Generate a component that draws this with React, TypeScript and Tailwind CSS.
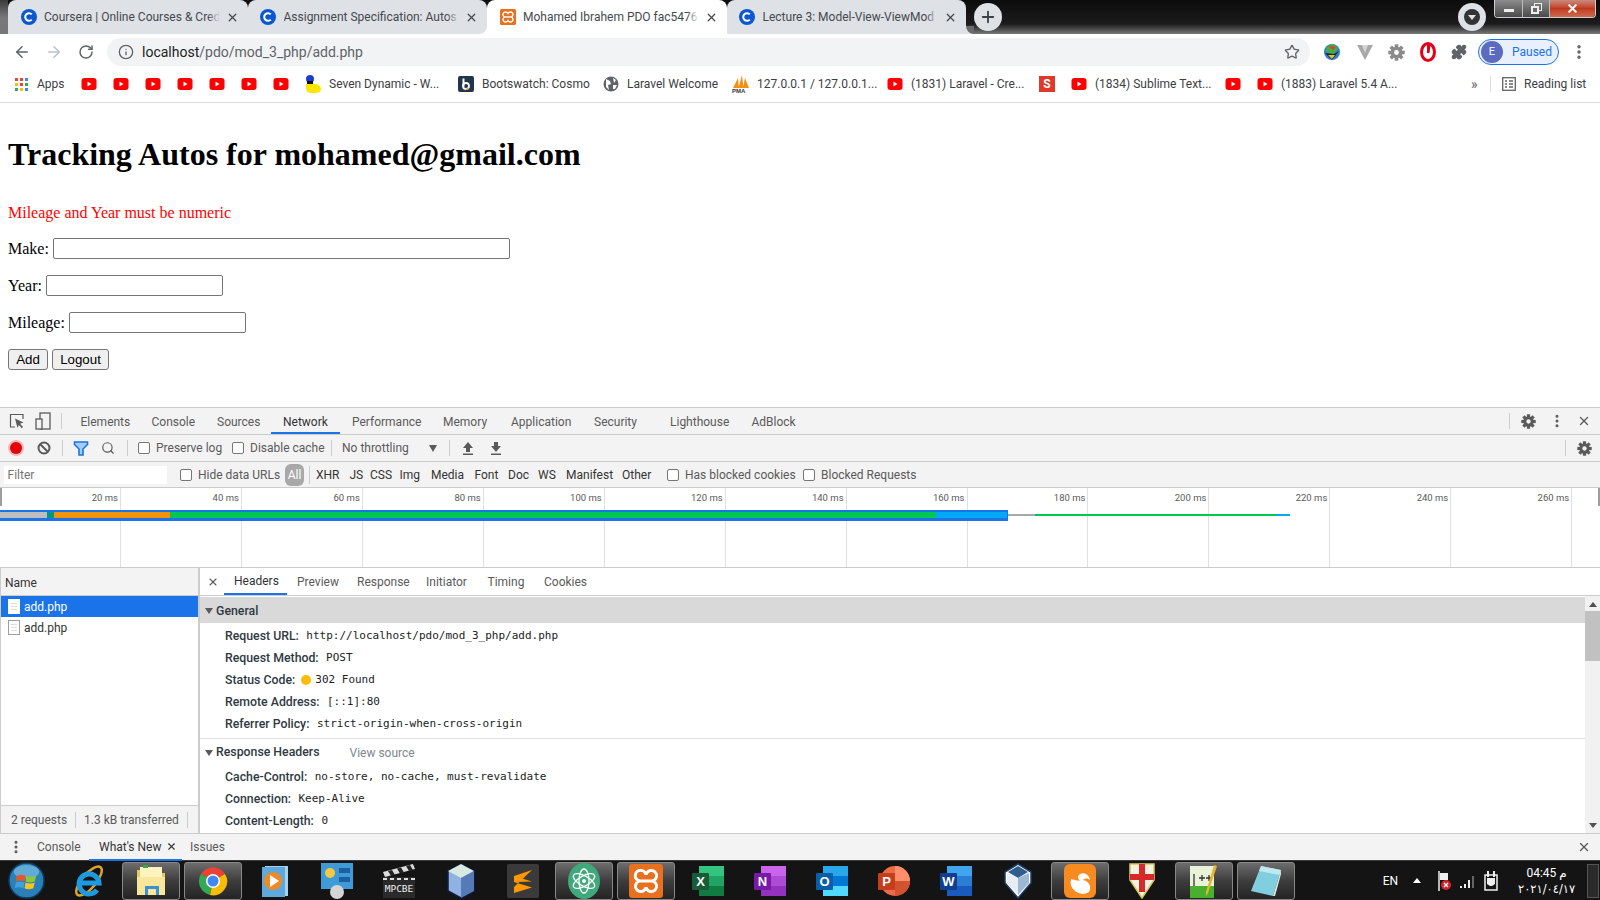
import { ArrowLeft, ArrowRight, RotateCw, Star, Info, Puzzle, EllipsisVertical, X, Plus, Search } from "lucide-react";

const uiFont = "font-['Roboto','Liberation_Sans',sans-serif]";
const monoFont = "font-['DejaVu_Sans_Mono',monospace]";

function CourseraIcon() {
  return (
    <svg width="16" height="16" viewBox="0 0 16 16" className="shrink-0">
      <circle cx="8" cy="8" r="8" fill="#0b57d0" />
      <path d="M10.8 5.4a3.8 3.8 0 1 0 0 5.2" fill="none" stroke="#fff" strokeWidth="2" />
    </svg>
  );
}

function XamppIcon({ size = 16 }: { size?: number }) {
  return (
    <svg width={size} height={size} viewBox="0 0 16 16" className="shrink-0">
      <rect width="16" height="16" rx="1.500" fill="#e8701f" />
      <path
        d="M5.500 3a2.500 2.500 0 0 0-1 4.800v.4a2.500 2.500 0 1 0 3.300 3.300h.4a2.500 2.500 0 1 0 3.300-3.300v-.4a2.500 2.500 0 1 0-3.300-3.300h-.4A2.500 2.500 0 0 0 5.500 3z"
        fill="none"
        stroke="#fff"
        strokeWidth="1.400"
      />
      <path d="M5 8h6" stroke="#fff" strokeWidth="1.400" />
    </svg>
  );
}

function YouTube() {
  return (
    <svg width="16" height="16" viewBox="0 0 16 16" className="shrink-0">
      <rect x="0.500" y="2" width="15" height="12" rx="3" fill="#f00" />
      <path d="M6.500 5.500v5l4-2.500z" fill="#fff" />
    </svg>
  );
}

function AppsGrid() {
  const colors = ["#ea4335", "#ea4335", "#4285f4", "#fbbc05", "#ea4335", "#34a853", "#34a853", "#fbbc05", "#4285f4"];
  return (
    <div className="grid grid-cols-3 gap-[2px] w-[13px] h-[13px] mx-[1px] shrink-0">
      {colors.map((c, i) => (
        <div key={i} className="w-[3px] h-[3px]" style={{ backgroundColor: c }} />
      ))}
    </div>
  );
}

function SevenIcon() {
  return (
    <svg width="16" height="18" viewBox="0 0 16 18" className="shrink-0">
      <circle cx="5" cy="4" r="4" fill="#1a3fd0" />
      <rect x="2" y="6" width="6" height="3" fill="#111" />
      <path d="M1 9h9a6 5 0 0 1 6 5c0 2-2 4-5 4H6a5 5 0 0 1-5-4z" fill="#ffe600" />
    </svg>
  );
}

function BootswatchIcon() {
  return (
    <svg width="16" height="16" viewBox="0 0 16 16" className="shrink-0">
      <rect width="16" height="16" rx="2" fill="#233548" />
      <path d="M5.500 2.500v8" stroke="#fff" strokeWidth="2" />
      <circle cx="8" cy="10" r="3" fill="none" stroke="#fff" strokeWidth="1.800" />
      <path d="M10.500 12a3.500 3.500 0 0 1-3 1.500" stroke="#f0a030" strokeWidth="1.500" fill="none" />
    </svg>
  );
}

function GlobeIcon() {
  return (
    <svg width="16" height="16" viewBox="0 0 16 16" className="shrink-0">
      <circle cx="8" cy="8" r="7.500" fill="#5f6368" />
      <path d="M3 3l4 2 1 3-3 1 1 5-3-3zM10 2l3 2-2 3zM10 9l4 0-2 4-2 0z" fill="#fff" />
    </svg>
  );
}

function PmaIcon() {
  return (
    <svg width="18" height="18" viewBox="0 0 18 18" className="shrink-0">
      <path d="M1 13L6 3l1 10zM6.500 13L10 0l1.500 13zM11 13l2-10 4 10z" fill="#f29111" />
      <text x="0" y="18" fontSize="6" fontWeight="700" fill="#333" fontFamily="Liberation Sans, sans-serif">PMA</text>
    </svg>
  );
}

function SublimeS() {
  return <div className="w-4 h-4 shrink-0 bg-[#e0392b] text-white text-[12px] font-bold flex items-center justify-center">S</div>;
}

const bookmarks: { w: number; icon: React.ReactNode; label?: string }[] = [
  { w: 68, icon: <AppsGrid />, label: "Apps" },
  { w: 32, icon: <YouTube /> },
  { w: 32, icon: <YouTube /> },
  { w: 32, icon: <YouTube /> },
  { w: 32, icon: <YouTube /> },
  { w: 32, icon: <YouTube /> },
  { w: 32, icon: <YouTube /> },
  { w: 32, icon: <YouTube /> },
  { w: 153, icon: <SevenIcon />, label: "Seven Dynamic - W..." },
  { w: 145, icon: <BootswatchIcon />, label: "Bootswatch: Cosmo" },
  { w: 130, icon: <GlobeIcon />, label: "Laravel Welcome" },
  { w: 154, icon: <PmaIcon />, label: "127.0.0.1 / 127.0.0.1..." },
  { w: 152, icon: <YouTube />, label: "(1831) Laravel - Cre..." },
  { w: 32, icon: <SublimeS /> },
  { w: 154, icon: <YouTube />, label: "(1834) Sublime Text..." },
  { w: 32, icon: <YouTube /> },
  { w: 212, icon: <YouTube />, label: "(1883) Laravel 5.4 A..." },
];

function ChromeTab({ icon, title, active, fade, flare }: { icon: React.ReactNode; title: string; active?: boolean; fade: string; flare?: React.ReactNode }) {
  return (
    <div className={`relative w-[239.500px] h-[34px] rounded-t-[8px] flex items-center pl-[12.500px] pr-[9px] shrink-0 ${active ? "bg-white" : "bg-[#dee1e6]"}`}>
      {icon}
      <div className="relative flex-1 ml-[7.500px] overflow-hidden whitespace-nowrap text-[12px] leading-[34px] text-[#45494d]">
        {title}
        <div className={`absolute right-0 top-0 bottom-0 w-3 ${fade}`} />
      </div>
      <X size={13} strokeWidth={2.400} className="ml-[6px] shrink-0 text-[#45494d]" />
      {flare}
    </div>
  );
}

function TabStrip() {
  return (
    <div className="relative h-[34px] flex pl-[8px] bg-linear-to-b from-[#0c0c0c] via-[#1b1b1b] via-70% to-[#7a7a7a]">
      <div className="absolute left-0 top-0 w-[8px] h-full bg-linear-to-b from-[#3a3a3a] via-[#777] to-[#777]" />
      <ChromeTab icon={<CourseraIcon />} title="Coursera | Online Courses & Cred" fade="bg-linear-to-r from-transparent to-[#dee1e6]" />
      <div className="w-0 relative">
        <div className="absolute left-0 top-[7px] h-[20px] w-px bg-[#80868b]" />
      </div>
      <ChromeTab icon={<CourseraIcon />} title="Assignment Specification: Autos" fade="bg-linear-to-r from-transparent to-[#dee1e6]" />
      <ChromeTab
        active
        icon={<XamppIcon />}
        title="Mohamed Ibrahem PDO fac5476"
        fade="bg-linear-to-r from-transparent to-white"
        flare={
          <>
            <div className="absolute -left-[8px] bottom-0 w-[8px] h-[8px] bg-white">
              <div className="w-full h-full bg-[#dee1e6] rounded-br-[8px]" />
            </div>
            <div className="absolute -right-[8px] bottom-0 w-[8px] h-[8px] bg-white">
              <div className="w-full h-full bg-[#dee1e6] rounded-bl-[8px]" />
            </div>
          </>
        }
      />
      <ChromeTab
        icon={<CourseraIcon />}
        title="Lecture 3: Model-View-ViewMod"
        fade="bg-linear-to-r from-transparent to-[#dee1e6]"
        flare={
          <div className="absolute -right-[8px] bottom-0 w-[8px] h-[8px] bg-[#dee1e6]">
            <div className="w-full h-full bg-[#6a6a6a] rounded-bl-[8px]" />
          </div>
        }
      />
      <div className="ml-[8px] mt-[2.500px] w-7 h-7 rounded-full bg-[#dee1e6] flex items-center justify-center text-[#3c4043] shrink-0">
        <Plus size={18} strokeWidth={2.400} />
      </div>
      <div className="ml-[456px] mt-[3px] w-7 h-7 rounded-full bg-[#dee1e6] flex items-center justify-center shrink-0">
        <div className="w-[16px] h-[16px] rounded-full bg-[#333] flex items-center justify-center">
          <div className="w-0 h-0 border-l-[4px] border-r-[4px] border-t-[5px] border-l-transparent border-r-transparent border-t-[#dee1e6]" />
        </div>
      </div>
      {/* window controls */}
      <div className="absolute right-[4px] top-0 h-[18px] w-[102px] flex rounded-b-[4px] border border-t-0 border-[#c9ccd1] overflow-hidden">
        <div className="w-[28px] bg-linear-to-b from-[#8d8d8d] to-[#4a4a4a] flex items-center justify-center border-r border-[#bbb]">
          <div className="w-[10px] h-[3px] bg-[#eee] mt-[4px]" />
        </div>
        <div className="relative w-[27px] bg-linear-to-b from-[#8d8d8d] to-[#4a4a4a] flex items-center justify-center border-r border-[#bbb]">
          <div className="relative w-[11px] h-[11px]">
            <div className="absolute right-0 top-0 w-[8px] h-[8px] border border-[#eee]" />
            <div className="absolute left-0 bottom-0 w-[8px] h-[8px] border-2 border-[#eee] bg-[#6a6a6a]" />
          </div>
        </div>
        <div className="flex-1 bg-linear-to-b from-[#c98a7c] via-[#c0391d] to-[#cf6a50] flex items-center justify-center text-[#f5f0ee]">
          <X size={13} strokeWidth={4} />
        </div>
      </div>
    </div>
  );
}

function Gear({ size = 16, color = "#5a5a5a", hole = "#f3f3f3" }: { size?: number; color?: string; hole?: string }) {
  return (
    <svg width={size} height={size} viewBox="0 0 16 16" className="shrink-0">
      {[0, 45, 90, 135].map((a) => (
        <rect key={a} x="6.300" y="0.300" width="3.400" height="15.400" fill={color} transform={`rotate(${a} 8 8)`} />
      ))}
      <circle cx="8" cy="8" r="5.500" fill={color} />
      <circle cx="8" cy="8" r="2.300" fill={hole} />
    </svg>
  );
}

function NavBar() {
  return (
    <div className="h-[34px] bg-white flex items-center pl-[13px] pt-[2px]">
      <ArrowLeft size={18} strokeWidth={2} className="text-[#5f6368]" />
      <ArrowRight size={18} strokeWidth={2} className="ml-[14px] text-[#bdc1c6]" />
      <RotateCw size={16} strokeWidth={2.200} className="ml-[15px] text-[#5f6368]" />
      <div className="ml-[13px] w-[1203px] h-[28px] rounded-full bg-[#f1f3f4] flex items-center pl-[11px] pr-[10px]">
        <Info size={16} strokeWidth={2} className="text-[#5f6368]" />
        <span className="ml-[8px] text-[14px] text-[#5f6368]">
          <span className="text-[#202124]">localhost</span>/pdo/mod_3_php/add.php
        </span>
        <Star size={16} strokeWidth={2} className="ml-auto text-[#5f6368]" />
      </div>
      <div className="ml-[13px] flex items-center">
        <svg width="18" height="18" viewBox="0 0 18 18">
          <circle cx="9" cy="9" r="8" fill="#2d7fd3" />
          <path d="M3 9a6 6 0 0 1 12-3l-5 6z" fill="#4aa84a" />
          <path d="M6 3l7 1-3 3z" fill="#e5392c" />
          <path d="M2 10l7 7 7-9-5 3z" fill="#111" opacity=".8" />
          <path d="M5 12l4 4 3-4z" fill="#e3c21f" />
        </svg>
        <svg width="16" height="18" viewBox="0 0 16 18" className="ml-[16px]">
          <path d="M0 2h16l-8 15z" fill="#a8a8a8" />
          <path d="M5 2h6l-3 8z" fill="#d5d5d5" />
        </svg>
        <div className="ml-[15px]"><Gear size={17} color="#8a8a8a" hole="#fff" /></div>
        <svg width="16" height="20" viewBox="0 0 16 20" className="ml-[15px]">
          <ellipse cx="8" cy="10" rx="6.500" ry="8.500" fill="none" stroke="#e5001a" strokeWidth="3" />
          <path d="M7 2l3.500 1-1 8H7z" fill="#e5001a" />
        </svg>
        <Puzzle size={16} fill="#5f6368" className="ml-[15px] text-[#5f6368]" />
      </div>
      <div className="ml-[11px] w-[81px] h-[26px] rounded-full border border-[#1a73e8] bg-[#e8f0fe] flex items-center pl-[2px]">
        <div className="w-[22px] h-[22px] rounded-full bg-[#5c6bc0] text-white text-[11px] flex items-center justify-center">E</div>
        <span className="ml-[9px] text-[12px] text-[#1a73e8]">Paused</span>
      </div>
      <EllipsisVertical size={18} strokeWidth={2.600} className="ml-[11px] text-[#5f6368]" />
    </div>
  );
}

function BookmarksBar() {
  return (
    <div className="h-[35px] bg-white border-b border-[#dadce0] flex items-center pl-[13px] pb-[2px]">
      {bookmarks.map((b, i) => (
        <div key={i} className="flex items-center shrink-0" style={{ width: b.w }}>
          <div className="w-4 flex justify-center">{b.icon}</div>
          {b.label && <span className="ml-[8px] whitespace-nowrap text-[12px] text-[#3c4043]">{b.label}</span>}
        </div>
      ))}
      <span className="ml-[2px] text-[14px] leading-none text-[#5f6368] w-[14px]">»</span>
      <div className="ml-[5px] w-px h-[16px] bg-[#dadce0]" />
      <svg width="14" height="14" viewBox="0 0 14 14" className="ml-[11px] text-[#5f6368]">
        <rect x="0.700" y="0.700" width="12.600" height="12.600" fill="none" stroke="currentColor" strokeWidth="1.300" />
        <path d="M3 4h2M7 4h4M3 7h2M7 7h4M3 10h2M7 10h4" stroke="currentColor" strokeWidth="1.300" />
      </svg>
      <span className="ml-[8px] whitespace-nowrap text-[12px] text-[#3c4043]">Reading list</span>
    </div>
  );
}

function TextBox({ width }: { width: number }) {
  return <input readOnly className="h-[21px] border border-[#767676] rounded-[2px] bg-white ml-[4px]" style={{ width }} />;
}

function FakeButton({ label, width }: { label: string; width: number }) {
  return (
    <button className="h-[21px] border border-[#767676] rounded-[3px] bg-[#efefef] text-[13.300px] text-black font-['Liberation_Sans',sans-serif] leading-none" style={{ width }}>
      {label}
    </button>
  );
}

function PageContent() {
  return (
    <div className="h-[304px] bg-white pl-[8px] font-['Liberation_Serif',serif] text-[16px] text-black overflow-hidden">
      <h1 className="mt-[33px] text-[32px] leading-[37px] font-bold">Tracking Autos for mohamed@gmail.com</h1>
      <p className="mt-[31px] leading-[18px] text-[#ff0000]">Mileage and Year must be numeric</p>
      <div className="mt-[16px] flex items-center h-[21px]">Make:<TextBox width={457} /></div>
      <div className="mt-[16px] flex items-center h-[21px]">Year:<TextBox width={177} /></div>
      <div className="mt-[16px] flex items-center h-[21px]">Mileage:<TextBox width={177} /></div>
      <div className="mt-[16px] flex gap-[4px]">
        <FakeButton label="Add" width={40} />
        <FakeButton label="Logout" width={57} />
      </div>
    </div>
  );
}

function Sep({ ml, h = 16 }: { ml: number; h?: number }) {
  return <div className="w-px bg-[#ccc] shrink-0" style={{ marginLeft: ml, height: h }} />;
}

function Check({ label, w }: { label: string; w: number }) {
  return (
    <div className="flex items-center shrink-0" style={{ width: w }}>
      <div className="w-[12px] h-[12px] rounded-[2px] border border-[#767676] bg-white shrink-0" />
      <span className="ml-[6px] whitespace-nowrap text-[#5a5a5a]">{label}</span>
    </div>
  );
}

const devTabs: [string, number][] = [
  ["Elements", 71],
  ["Console", 65.500],
  ["Sources", 66],
  ["Network", 69],
  ["Performance", 91],
  ["Memory", 68],
  ["Application", 83],
  ["Security", 76],
  ["Lighthouse", 81.500],
  ["AdBlock", 60],
];

function DevToolsTabs() {
  return (
    <div className="h-[27px] bg-[#f3f3f3] border-b border-[#ccc] flex items-center text-[12px] text-[#5a5a5a]">
      <svg width="16" height="16" viewBox="0 0 16 16" className="ml-[9px] shrink-0">
        <path d="M6 14H1.500V1.500H14V6" fill="none" stroke="#5a5a5a" strokeWidth="1.200" />
        <path d="M6 5.500l8.500 4-3.500 1.300 3 3.200-1.200 1.200-3-3.200L8.500 15z" fill="#5a5a5a" />
      </svg>
      <svg width="16" height="18" viewBox="0 0 16 18" className="ml-[10px] shrink-0">
        <rect x="5" y="1" width="10" height="16" fill="none" stroke="#5a5a5a" strokeWidth="1.300" />
        <rect x="1" y="7" width="6" height="10" fill="#f3f3f3" stroke="#5a5a5a" strokeWidth="1.300" />
      </svg>
      <Sep ml={10} />
      <div className="ml-[6.500px] flex h-full">
        {devTabs.map(([name, w]) => (
          <div key={name} className={`h-full pl-[12px] pt-[3px] flex items-center whitespace-nowrap border-b-2 ${name === "Network" ? "border-[#1a73e8] text-[#333]" : "border-transparent"}`} style={{ width: w }}>
            {name}
          </div>
        ))}
      </div>
      <div className="ml-auto flex items-center">
        <Sep ml={0} />
        <div className="ml-[11px]"><Gear size={15} /></div>
        <EllipsisVertical size={16} strokeWidth={2.500} className="ml-[13px] text-[#5a5a5a]" />
        <X size={14} strokeWidth={2.400} className="ml-[12px] mr-[9px] text-[#5a5a5a]" />
      </div>
    </div>
  );
}

function NetworkToolbar() {
  return (
    <div className="h-[27px] bg-[#f3f3f3] border-b border-[#ccc] flex items-center text-[12px]">
      <div className="ml-[10px] w-[12px] h-[12px] rounded-full bg-[#e3000b] shadow-[0_0_0_2px_#f4b9b9] shrink-0" />
      <svg width="14" height="14" viewBox="0 0 14 14" className="ml-[15px] shrink-0">
        <circle cx="7" cy="7" r="5.500" fill="none" stroke="#5a5a5a" strokeWidth="2" />
        <path d="M3 3l8 8" stroke="#5a5a5a" strokeWidth="2" />
      </svg>
      <Sep ml={11} />
      <svg width="16" height="16" viewBox="0 0 16 16" className="ml-[10px] shrink-0">
        <path d="M1.500 2h13v2.500L10 9v6H6V9L1.500 4.500z" fill="#a6cdf7" stroke="#1a73e8" strokeWidth="1.600" />
      </svg>
      <Search size={14} strokeWidth={2} className="ml-[12px] shrink-0 text-[#5a5a5a]" />
      <Sep ml={12} />
      <div className="ml-[10px]"><Check label="Preserve log" w={94} /></div>
      <Check label="Disable cache" w={99} />
      <Sep ml={0} />
      <span className="ml-[10px] w-[85px] whitespace-nowrap text-[#5a5a5a]">No throttling</span>
      <div className="w-0 h-0 ml-[2px] border-l-[4px] border-r-[4px] border-t-[7px] border-l-transparent border-r-transparent border-t-[#5a5a5a]" />
      <Sep ml={12} />
      <svg width="12" height="14" viewBox="0 0 12 14" className="ml-[12px] shrink-0">
        <path d="M6 1l5 6H8v4H4V7H1zM1 12.500h10V14H1z" fill="#5a5a5a" />
      </svg>
      <svg width="12" height="14" viewBox="0 0 12 14" className="ml-[16px] shrink-0">
        <path d="M6 11L1 5h3V1h4v4h3zM1 12.500h10V14H1z" fill="#5a5a5a" />
      </svg>
      <div className="ml-auto flex items-center">
        <Sep ml={0} />
        <div className="ml-[11px] mr-[8px]"><Gear size={15} /></div>
      </div>
    </div>
  );
}

const filterTypes: [string, number][] = [
  ["XHR", 33.500],
  ["JS", 20.500],
  ["CSS", 29.500],
  ["Img", 31.500],
  ["Media", 43.500],
  ["Font", 33.500],
  ["Doc", 30],
  ["WS", 28],
  ["Manifest", 56],
  ["Other", 45],
];

function FilterRow() {
  return (
    <div className="h-[25px] bg-[#f3f3f3] flex items-center text-[12px]">
      <div className="ml-[4px] w-[163px] h-[18px] bg-white pl-[3.500px] text-[12px] leading-[18px] text-[#757575] shrink-0">Filter</div>
      <div className="ml-[13px]"><Check label="Hide data URLs" w={105} /></div>
      <div className="w-[19px] h-[22px] rounded-[6px] bg-[#a8a8a8] text-white text-center leading-[22px] shrink-0">All</div>
      <Sep ml={5} h={18} />
      <div className="ml-[6px] flex text-[#333]">
        {filterTypes.map(([t, w]) => (
          <span key={t} className="shrink-0" style={{ width: w }}>{t}</span>
        ))}
      </div>
      <Check label="Has blocked cookies" w={136} />
      <Check label="Blocked Requests" w={120} />
    </div>
  );
}

const ticks = ["20", "40", "60", "80", "100", "120", "140", "160", "180", "200", "220", "240", "260"];

function Overview() {
  return (
    <div className="relative h-[81px] bg-white border-y border-[#ccc] flex overflow-hidden">
      {ticks.map((t) => (
        <div key={t} className="w-[120.950px] shrink-0 border-r border-[#e0e0e0] text-right pr-[2px] pt-[3px] text-[9.500px] leading-[14px] text-[#5a5a5a]">
          {t} ms
        </div>
      ))}
      {/* waterfall bars */}
      <div className="absolute left-0 top-[22px] w-[1008px] h-[11px] bg-[#1a73e8]" />
      <div className="absolute left-0 top-[24px] w-[47px] h-[6px] bg-[#bdbdbd]" />
      <div className="absolute left-[47px] top-[24px] w-[7px] h-[6px] bg-[#009688]" />
      <div className="absolute left-[54px] top-[24px] w-[116px] h-[6px] bg-[#f2930b]" />
      <div className="absolute left-[170px] top-[24px] w-[766px] h-[6px] bg-[#00c853]" />
      <div className="absolute left-[936px] top-[24px] w-[71px] h-[6px] bg-[#03a9f4]" />
      <div className="absolute left-[1008px] top-[26px] w-[27px] h-[2px] bg-[#a8a8a8]" />
      <div className="absolute left-[1035px] top-[26px] w-[241px] h-[2px] bg-[#00c853]" />
      <div className="absolute left-[1276px] top-[26px] w-[14px] h-[2px] bg-[#03a9f4]" />
      <div className="absolute left-0 top-0 w-[2px] h-[18px] bg-[#9e9e9e]" />
      <div className="absolute right-0 top-0 w-[2px] h-[18px] bg-[#9e9e9e]" />
    </div>
  );
}

function DocIcon({ selected }: { selected?: boolean }) {
  return (
    <div className={`w-[12px] h-[15px] border shrink-0 flex flex-col gap-[2px] px-[2px] pt-[3px] ${selected ? "bg-white border-white" : "bg-white border-[#9e9e9e]"}`}>
      <div className="h-px bg-[#ddd]" />
      <div className="h-px bg-[#ddd]" />
      <div className="h-px bg-[#ddd]" />
    </div>
  );
}

function NamePanel() {
  return (
    <div className="w-[200px] shrink-0 border-r-2 border-[#ccc] bg-white flex flex-col border-l border-l-[#ccc]">
      <div className="h-[28px] bg-[#f3f3f3] border-b border-[#ccc] pl-[4px] pt-[2px] flex items-center text-[12px] text-[#333]">Name</div>
      <div className="h-[21px] bg-[#1a73e8] flex items-center pl-[7px] text-white text-[12px]">
        <DocIcon selected />
        <span className="ml-[4px]">add.php</span>
      </div>
      <div className="h-[21px] flex items-center pl-[7px] text-[#333] text-[12px]">
        <DocIcon />
        <span className="ml-[4px]">add.php</span>
      </div>
      <div className="mt-auto h-[28px] bg-[#f3f3f3] border-t border-[#ccc] flex items-center text-[12px] text-[#5a5a5a]">
        <span className="ml-[10px] w-[64px]">2 requests</span>
        <Sep ml={0} />
        <span className="ml-[8px] w-[103px] whitespace-nowrap">1.3 kB transferred</span>
        <Sep ml={0} />
      </div>
    </div>
  );
}

function HeaderRow({ name, value, dot }: { name: string; value: string; dot?: boolean }) {
  return (
    <div className="h-[22px] pl-[25px] flex items-center whitespace-nowrap">
      <span className="font-medium text-[#303942] text-[12.300px]">{name}</span>
      {dot && <span className="ml-[6px] w-[10px] h-[10px] rounded-full bg-[#fbbc05]" />}
      <span className={`${dot ? "ml-[4px]" : "ml-[7.500px]"} ${monoFont} text-[11px] text-[#222]`}>{value}</span>
    </div>
  );
}

function SectionTitle({ title }: { title: string }) {
  return (
    <>
      <div className="w-0 h-0 ml-[5px] border-l-[4px] border-r-[4px] border-t-[6px] border-l-transparent border-r-transparent border-t-[#5a5a5a]" />
      <span className="ml-[3px] font-medium text-[12.300px] text-[#303942]">{title}</span>
    </>
  );
}

function DetailsPanel() {
  return (
    <div className="flex-1 min-w-0 flex flex-col bg-white">
      <div className="h-[28px] bg-white border-b border-[#ccc] flex items-center text-[12px] text-[#5a5a5a] shrink-0">
        <X size={12} strokeWidth={2.200} className="ml-[7px]" />
        <div className="ml-[5px] h-full w-[63px] pl-[10px] flex items-center border-b-2 border-[#1a73e8] text-[#333]">Headers</div>
        <span className="ml-[10px] w-[60px]">Preview</span>
        <span className="w-[69px]">Response</span>
        <span className="w-[61.500px]">Initiator</span>
        <span className="w-[56.500px]">Timing</span>
        <span>Cookies</span>
      </div>
      <div className="flex-1 min-h-0 flex">
        <div className="flex-1 min-w-0 overflow-hidden pt-[1px]">
          <div className="h-[26px] bg-[#d9d9d9] pt-[2px] flex items-center">
            <SectionTitle title="General" />
          </div>
          <div className="pt-[2px]">
            <HeaderRow name="Request URL:" value="http://localhost/pdo/mod_3_php/add.php" />
            <HeaderRow name="Request Method:" value="POST" />
            <HeaderRow name="Status Code:" value="302 Found" dot />
            <HeaderRow name="Remote Address:" value="[::1]:80" />
            <HeaderRow name="Referrer Policy:" value="strict-origin-when-cross-origin" />
          </div>
          <div className="mt-[3px] border-t border-[#e0e0e0] h-[28px] flex items-center">
            <SectionTitle title="Response Headers" />
            <span className="ml-[30px] text-[12px] text-[#80868b]">View source</span>
          </div>
          <HeaderRow name="Cache-Control:" value="no-store, no-cache, must-revalidate" />
          <HeaderRow name="Connection:" value="Keep-Alive" />
          <HeaderRow name="Content-Length:" value="0" />
        </div>
        {/* scrollbar */}
        <div className="w-[15px] shrink-0 bg-[#f1f1f1] flex flex-col items-center">
          <div className="mt-[6px] w-0 h-0 border-l-[4px] border-r-[4px] border-b-[5px] border-l-transparent border-r-transparent border-b-[#505050]" />
          <div className="mt-[4px] w-full h-[50px] bg-[#c1c1c1]" />
          <div className="mt-auto mb-[5px] w-0 h-0 border-l-[4px] border-r-[4px] border-t-[5px] border-l-transparent border-r-transparent border-t-[#505050]" />
        </div>
      </div>
    </div>
  );
}

function Drawer() {
  return (
    <div className="h-[27px] bg-[#f3f3f3] border-t border-[#ccc] flex items-center text-[12px] text-[#5a5a5a]">
      <EllipsisVertical size={16} strokeWidth={2.500} className="ml-[8px] shrink-0" />
      <span className="ml-[13px] w-[52px]">Console</span>
      <div className="relative w-[93px] pl-[10px] h-full flex items-center border-b-2 border-[#1a73e8] -mb-[1px] text-[#333]">
        What's New
        <X size={11} strokeWidth={2.400} className="ml-[5px]" />
      </div>
      <span className="ml-[8px]">Issues</span>
      <X size={14} strokeWidth={2.400} className="ml-auto mr-[9px]" />
    </div>
  );
}

function StartOrb() {
  return (
    <svg width="37" height="37" viewBox="0 0 38 38">
      <circle cx="19" cy="19" r="18" fill="#2a7fb8" stroke="#0e3b5e" strokeWidth="1.500" />
      <ellipse cx="19" cy="10" rx="13" ry="7" fill="#8fd0ef" opacity=".55" />
      <path d="M9 14q4-2 9 0l-1 6q-5-2-9 0z" fill="#e8572a" />
      <path d="M19 14q5 2 10 0l-1.500 6q-5 2-9.500 0z" fill="#8cc63f" />
      <path d="M8 21q4-2 9 0l-1 6q-5-2-9 0z" fill="#3aa2e0" />
      <path d="M18 21q5 2 9.500 0l-1.500 6q-5 2-9 0z" fill="#f8c51c" />
    </svg>
  );
}

function TaskIcon({ name }: { name: string }) {
  switch (name) {
    case "ie":
      return (
        <svg width="34" height="36" viewBox="0 0 34 36">
          <ellipse cx="17" cy="18" rx="18" ry="7" transform="rotate(-50 17 18)" fill="none" stroke="#e0a526" strokeWidth="2.500" />
          <path d="M8 20h19a10 10 0 1 0-2 7" fill="none" stroke="#1d9be0" strokeWidth="5" />
        </svg>
      );
    case "explorer":
      return (
        <svg width="34" height="34" viewBox="0 0 34 34">
          <path d="M3 6h12l2 3h14v21H3z" fill="#e8c765" />
          <rect x="6" y="3" width="22" height="12" fill="#fff4bf" />
          <rect x="9" y="1" width="5" height="3" fill="#3aa64a" />
          <rect x="3" y="13" width="28" height="18" fill="#f8e79a" />
          <path d="M11 31V22h14v9h-3v-6h-8v6z" fill="#3d8fd1" />
        </svg>
      );
    case "chrome":
      return (
        <svg width="32" height="32" viewBox="0 0 32 32">
          <path d="M16 16L4 9a14 14 0 0 1 24 0z" fill="#ea4335" />
          <path d="M16 16L4 9a14 14 0 0 0 9 21z" fill="#34a853" />
          <path d="M16 16l12-7a14 14 0 0 1-15 21z" fill="#fbbc05" />
          <circle cx="16" cy="16" r="7" fill="#fff" />
          <circle cx="16" cy="16" r="5.500" fill="#4285f4" />
        </svg>
      );
    case "media":
      return (
        <svg width="26" height="32" viewBox="0 0 26 32">
          <rect x="3" y="1" width="23" height="30" fill="#a7d2ef" />
          <rect x="0" y="2" width="23" height="30" fill="#5fa8dc" />
          <circle cx="11" cy="16" r="9" fill="#f08a24" />
          <path d="M8 10v12l9-6z" fill="#fff" />
        </svg>
      );
    case "panel":
      return (
        <svg width="32" height="36" viewBox="0 0 32 36">
          <rect width="32" height="26" fill="#3f9bd8" />
          <circle cx="9" cy="10" r="5" fill="#f8c940" />
          <rect x="18" y="5" width="11" height="5" fill="#1d5f9f" />
          <rect x="18" y="14" width="11" height="5" fill="#1d5f9f" />
          <circle cx="16" cy="29" r="7" fill="#d5d5d5" />
        </svg>
      );
    case "mpc":
      return (
        <svg width="32" height="34" viewBox="0 0 32 34">
          <path d="M0 8l30-8 2 5L2 13z" fill="#ddd" />
          <path d="M5 7l3 5 4-1-3-5zM14 4.500l3 5 4-1-3-5zM23 2l3 5 4-1-3-5z" fill="#222" />
          <rect y="13" width="32" height="21" fill="#2a2a2a" />
          <path d="M0 15h32" stroke="#ddd" strokeWidth="2" strokeDasharray="4 3" />
          <text x="16" y="28" fontSize="9.500" textAnchor="middle" fill="#eee" fontFamily="DejaVu Sans Mono, monospace">MPCBE</text>
        </svg>
      );
    case "box":
      return (
        <svg width="30" height="36" viewBox="0 0 30 36">
          <path d="M15 1l13 7v20l-13 7-13-7V8z" fill="#8fb2e2" stroke="#111d44" strokeWidth="1.500" />
          <path d="M15 1l13 7-13 7L2 8z" fill="#d6e8e0" />
          <path d="M15 15v20l13-7V8z" fill="#5679b8" />
        </svg>
      );
    case "sublime":
      return (
        <svg width="32" height="34" viewBox="0 0 32 34">
          <rect width="32" height="34" rx="2" fill="#3a3a3a" />
          <path d="M25 6L7 12v6l18 5.500v-6L7 12v6l18-.500v6L7 29v-6z" fill="#ff9800" />
        </svg>
      );
    case "atom":
      return (
        <svg width="32" height="36" viewBox="0 0 32 36">
          <ellipse cx="16" cy="18" rx="16" ry="18" fill="#3fa97c" />
          <g fill="none" stroke="#fff" strokeWidth="1.300">
            <ellipse cx="16" cy="18" rx="5" ry="12" />
            <ellipse cx="16" cy="18" rx="5" ry="12" transform="rotate(60 16 18)" />
            <ellipse cx="16" cy="18" rx="5" ry="12" transform="rotate(-60 16 18)" />
          </g>
          <circle cx="16" cy="18" r="2" fill="#fff" />
        </svg>
      );
    case "xampp":
      return <XamppIcon size={34} />;
    case "excel":
      return <OfficeIcon letter="X" light="#33c481" mid="#21a366" dark="#107c41" badge="#185c37" />;
    case "onenote":
      return <OfficeIcon letter="N" light="#ca64ea" mid="#ae4bd5" dark="#9332bf" badge="#7719aa" />;
    case "word":
      return <OfficeIcon letter="W" light="#41a5ee" mid="#2b7cd3" dark="#185abd" badge="#103f91" />;
    case "outlook":
      return <OfficeIcon letter="O" light="#28a8ea" mid="#0078d4" dark="#50d9ff" badge="#0a5ea8" />;
    case "ppt":
      return (
        <svg width="32" height="32" viewBox="0 0 32 32">
          <circle cx="17" cy="16" r="15" fill="#ed6c47" />
          <path d="M17 1a15 15 0 0 1 15 15H17z" fill="#ff8f6b" />
          <path d="M17 16h15a15 15 0 0 1-15 15z" fill="#d35230" />
          <rect x="0" y="8" width="17" height="17" rx="1" fill="#c43e1c" />
          <text x="8.500" y="21" fontSize="13" fontWeight="700" textAnchor="middle" fill="#fff" fontFamily="Liberation Sans, sans-serif">P</text>
        </svg>
      );
    case "vbox":
      return (
        <svg width="28" height="36" viewBox="0 0 28 36">
          <path d="M14 1l13 8v11l-13 15L1 20V9z" fill="#fff" stroke="#1c3c63" strokeWidth="1.500" />
          <path d="M14 3l10 6-10 6L4 9z" fill="#2f5d8e" />
          <path d="M14 15v17L3 20V10z" fill="#e7edf3" />
          <path d="M14 15v17l11-12V10z" fill="#9db8d3" />
        </svg>
      );
    case "uc":
      return (
        <svg width="32" height="34" viewBox="0 0 32 34">
          <rect width="32" height="34" rx="6" fill="#f78b1f" />
          <path d="M7 15a12 12 0 0 0 18 13 8 8 0 0 0-6-12c2-2 5-2 7 0-1-6-6-8-10-6-3 2-2 5 0 7-3-1-7-1-9-2z" fill="#fff" />
        </svg>
      );
    case "shield":
      return (
        <svg width="26" height="36" viewBox="0 0 26 36">
          <path d="M1 1h24v16l-12 18L1 17z" fill="#f4f1e3" stroke="#d8c95a" strokeWidth="1.500" />
          <rect x="10" y="1" width="6" height="28" fill="#d62a2a" />
          <rect x="1" y="11" width="24" height="6" fill="#d62a2a" />
        </svg>
      );
    case "npp":
      return (
        <svg width="30" height="34" viewBox="0 0 30 34">
          <rect x="1" y="2" width="24" height="32" fill="#e8f3d8" />
          <rect x="1" y="22" width="24" height="12" fill="#48b02c" />
          <path d="M5 10v12M10 14h6M13 11v6M17 14h6M20 11v6" stroke="#333" strokeWidth="1.300" />
          <path d="M28 2l-9 27-2 3 0-4L25 1z" fill="#e8b530" />
        </svg>
      );
    case "notepad":
      return (
        <svg width="30" height="34" viewBox="0 0 30 34">
          <path d="M10 2l20 4-8 26-22-5z" fill="#7fcfe0" />
          <path d="M10 2l20 4-1.500 5L8 7z" fill="#c2e8ef" />
          <path d="M22 32l8-26v4l-6 22z" fill="#e5e5e5" />
        </svg>
      );
    default:
      return null;
  }
}

function OfficeIcon({ letter, light, mid, dark, badge }: { letter: string; light: string; mid: string; dark: string; badge: string }) {
  return (
    <svg width="32" height="32" viewBox="0 0 32 32">
      <rect x="7" y="1" width="25" height="10" fill={light} />
      <rect x="7" y="11" width="25" height="10" fill={mid} />
      <rect x="7" y="21" width="25" height="10" fill={dark} />
      <rect x="0" y="8" width="17" height="17" rx="1" fill={badge} />
      <text x="8.500" y="21" fontSize="13" fontWeight="700" textAnchor="middle" fill="#fff" fontFamily="Liberation Sans, sans-serif">{letter}</text>
    </svg>
  );
}

const taskItems: { name: string; on?: boolean }[] = [
  { name: "ie" },
  { name: "explorer", on: true },
  { name: "chrome", on: true },
  { name: "media" },
  { name: "panel" },
  { name: "mpc" },
  { name: "box" },
  { name: "sublime" },
  { name: "atom", on: true },
  { name: "xampp", on: true },
  { name: "excel" },
  { name: "onenote" },
  { name: "outlook" },
  { name: "ppt" },
  { name: "word" },
  { name: "vbox" },
  { name: "uc", on: true },
  { name: "shield" },
  { name: "npp", on: true },
  { name: "notepad", on: true },
];

function Taskbar() {
  return (
    <div className="h-[40px] bg-[#141414] border-t border-[#3a3a3a] flex items-center text-white overflow-hidden">
      <div className="w-[58px] shrink-0 pl-[8px]">
        <StartOrb />
      </div>
      {taskItems.map((t) => (
        <div key={t.name} className="w-[61.950px] h-[39px] shrink-0 flex items-center justify-center">
          <div className={`w-[58px] h-[38px] flex items-center justify-center rounded-[3px] ${t.on ? "border border-[#888] bg-linear-to-b from-[#6d6d6d] via-[#3d3d3d] to-[#242424]" : ""}`}>
            <TaskIcon name={t.name} />
          </div>
        </div>
      ))}
      {/* tray */}
      <span className="ml-[86px] text-[12px]">EN</span>
      <div className="ml-[15px] w-0 h-0 border-l-[4px] border-r-[4px] border-b-[5px] border-l-transparent border-r-transparent border-b-white" />
      <svg width="14" height="20" viewBox="0 0 14 20" className="ml-[16px]">
        <path d="M2 0v20" stroke="#eee" strokeWidth="1.500" />
        <path d="M3 2h8v7H3z" fill="#eee" />
        <circle cx="9" cy="14" r="5" fill="#d8202a" />
        <path d="M7 12l4 4m0-4l-4 4" stroke="#fff" strokeWidth="1.300" />
      </svg>
      <svg width="16" height="14" viewBox="0 0 16 14" className="ml-[8px]">
        <path d="M1 14v-2h2v2zM5 14v-4h2v4zM9 14V6h2v8z" fill="#eee" />
        <path d="M13 14V2h2v12z" fill="#666" />
      </svg>
      <svg width="14" height="20" viewBox="0 0 14 20" className="ml-[9px]">
        <rect x="1" y="4" width="12" height="15" fill="none" stroke="#eee" strokeWidth="1.500" />
        <path d="M4 6v-6M10 6V0" stroke="#eee" strokeWidth="2" />
        <path d="M3 7h8v6l-3 2H6l-3-2z" fill="#eee" />
      </svg>
      <div className="flex-1 flex flex-col items-center text-[11.500px] leading-[16px] font-['DejaVu_Sans',sans-serif] pl-[8px]">
        <span className="font-['Roboto','DejaVu_Sans',sans-serif] text-[12px]">04:45 م</span>
        <span>٢٠٢١/٠٤/١٧</span>
      </div>
      <div className="w-[12px] h-[34px] mr-[1px] border border-[#555] bg-[#2a2a2a]" />
    </div>
  );
}

export default function App() {
  return (
    <div className={`w-[1600px] h-[900px] overflow-hidden flex flex-col ${uiFont}`}>
      <TabStrip />
      <NavBar />
      <BookmarksBar />
      <PageContent />
      <div className="border-t border-[#ccc] flex flex-col">
        <DevToolsTabs />
        <NetworkToolbar />
        <FilterRow />
        <Overview />
        <div className="h-[265px] flex">
          <NamePanel />
          <DetailsPanel />
        </div>
        <Drawer />
      </div>
      <Taskbar />
    </div>
  );
}
